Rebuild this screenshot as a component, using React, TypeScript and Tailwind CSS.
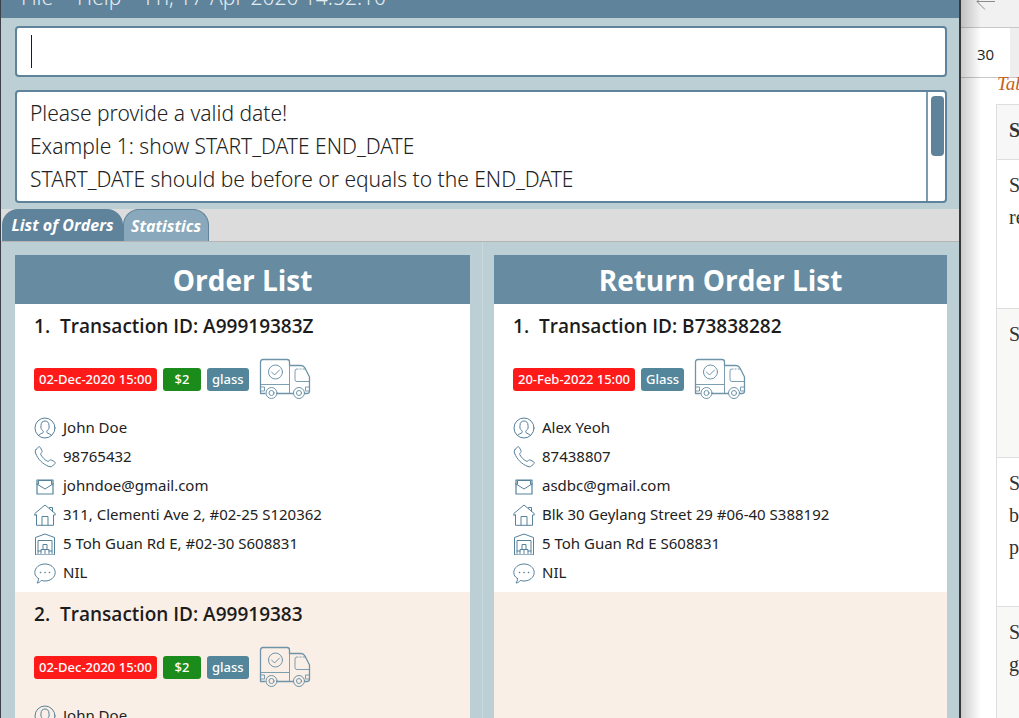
import type { ReactNode } from "react";

type Order = {
  id: string;
  date: string;
  cost?: string;
  tag: string;
  name: string;
  phone: string;
  email: string;
  address: string;
  warehouse: string;
  comment: string;
};

const orders: Order[] = [
  {
    id: "A99919383Z",
    date: "02-Dec-2020 15:00",
    cost: "$2",
    tag: "glass",
    name: "John Doe",
    phone: "98765432",
    email: "johndoe@gmail.com",
    address: "311, Clementi Ave 2, #02-25 S120362",
    warehouse: "5 Toh Guan Rd E, #02-30 S608831",
    comment: "NIL",
  },
  {
    id: "A99919383",
    date: "02-Dec-2020 15:00",
    cost: "$2",
    tag: "glass",
    name: "John Doe",
    phone: "98765432",
    email: "johndoe@gmail.com",
    address: "311, Clementi Ave 2, #02-25 S120362",
    warehouse: "5 Toh Guan Rd E, #02-30 S608831",
    comment: "NIL",
  },
];

const returns: Order[] = [
  {
    id: "B73838282",
    date: "20-Feb-2022 15:00",
    tag: "Glass",
    name: "Alex Yeoh",
    phone: "87438807",
    email: "asdbc@gmail.com",
    address: "Blk 30 Geylang Street 29 #06-40 S388192",
    warehouse: "5 Toh Guan Rd E S608831",
    comment: "NIL",
  },
];

function Icon({ children }: { children: ReactNode }) {
  return (
    <svg
      viewBox="0 0 22 22"
      className="size-[22px] shrink-0"
      fill="none"
      stroke="#55819b"
      strokeWidth="1"
      strokeLinejoin="round"
      strokeLinecap="round"
      aria-hidden="true"
    >
      {children}
    </svg>
  );
}

const PersonIcon = () => (
  <Icon>
    <circle cx="11" cy="11" r="10" />
    <path d="M4.5 18.5c.5-1.8 3.600-1.600 4.600-3 .5-.8 0-1.500-.6-2.300C7 12.500 6.600 10.500 7 8.500 7 5.500 8.600 4 11 4s4 1.500 4 4.500c.4 2 0 4-1.500 4.700-.6.8-1.100 1.500-.6 2.300 1 1.400 4.100 1.200 4.600 3" />
  </Icon>
);

const PhoneIcon = () => (
  <Icon>
    <path d="M2 3.500 4.500 1c1-.5 1.500 0 2 .8l1.500 3c.4 1 0 1.500-.8 2.200-.7.700-.7 1.200-.2 2 1.500 2.500 3.500 4.500 6 6 .8.500 1.300.5 2-.2.700-.8 1.200-1.200 2.200-.8l3 1.500c.8.5 1.300 1 .8 2L18.500 20c-.8.800-2 1-3.500.5C8.500 18 4 13.500 1.500 7 1 5.500 1.200 4.300 2 3.500z" />
  </Icon>
);

const MailIcon = () => (
  <Icon>
    <path d="M3 9v10h16V9" strokeWidth="1.200" />
    <path d="M4.500 9V5.500h13V9M3 9l8 5 8-5" />
    <path d="M3 9V5h16v4" strokeWidth="1.200" />
  </Icon>
);

const HouseIcon = () => (
  <Icon>
    <path d="M.8 11V9.500L11 1l10.200 8.500V11h-1.700v10.300h-17V11zM8 21v-8.500h6V21M15.500 4.500V3.500h3v4" />
  </Icon>
);

const WarehouseIcon = () => (
  <Icon>
    <path d="M1.500 21.500v-17L11 1l9.500 3.500v17zM4 20.500V7.500h14v13" />
    <path d="M9 16.500v-5h4v5M7 20.500v-4h8v4M11 16.500v4M4 18h3m8 0h3" />
  </Icon>
);

const ChatIcon = () => (
  <Icon>
    <path d="M4.500 16.700C2.200 15.200.8 13 .8 10.500.8 5.700 5.400 2 11 2s10.200 3.700 10.200 8.500S16.600 19 11 19c-1.400 0-2.600-.2-3.700-.6-1.200 1.600-2.300 2.400-4.300 2.600 1-1.300 1.500-2.600 1.500-4.300z" />
    <path d="M6.500 10.500h.1M11 10.500h.1M15.500 10.500h.1" strokeWidth="1.600" />
  </Icon>
);

const Truck = () => (
  <svg
    viewBox="0 0 52 42"
    className="h-[42px] w-[52px] shrink-0"
    fill="none"
    stroke="#6f93a8"
    strokeWidth="1"
    strokeLinejoin="round"
    strokeLinecap="round"
    role="img"
    aria-label="Delivery truck"
  >
    <path d="M6 35.500H1.500V4Q1.500 1.500 4 1.500h24q2.500 0 2.500 2.500v3.500H42q2.500 0 4 2.500l4.500 9v14q0 2.500-2.500 2.500h-2.500M18 35.500h16" strokeWidth="1.300" />
    <path d="M30.500 7.500v28M1.500 26.500h29M1.500 29h4v4h-4M50.500 29h-4v4h4M50 23.500H38q-2 0-2-2V13q0-2 2-2h1m2 0h1m2 0h2.500" strokeWidth=".9" />
    <circle cx="16.500" cy="14" r="7" />
    <path d="m12.500 14 3 3 5-5" />
    <circle cx="12.500" cy="35" r="5.500" />
    <circle cx="12.500" cy="35" r="2.500" />
    <circle cx="40" cy="35" r="5.500" />
    <circle cx="40" cy="35" r="2.500" />
  </svg>
);

function OrderCard({ order, index }: { order: Order; index: number }) {
  const rows: [ReactNode, string][] = [
    [<PersonIcon />, order.name],
    [<PhoneIcon />, order.phone],
    [<MailIcon />, order.email],
    [<HouseIcon />, order.address],
    [<WarehouseIcon />, order.warehouse],
    [<ChatIcon />, order.comment],
  ];
  return (
    <li className="bg-white px-[19px] pt-2 pb-[5px] even:bg-[#faefe6]">
      <h3 className="flex gap-[10px] text-[19px] leading-7 font-semibold text-[#1c1c1c]">
        <span>{index}.</span>
        <span>Transaction ID: {order.id}</span>
      </h3>
      <div className="mt-[18px] flex h-[42px] items-center gap-[6px] font-['Noto_Sans',sans-serif] text-[13px] leading-[23px] font-medium text-white">
        <span className="rounded-[3px] bg-[#ff1a1a] px-[5px]">{order.date}</span>
        {order.cost && <span className="w-[38px] rounded-[3px] bg-[#1b8c1b] text-center">{order.cost}</span>}
        <span className="mr-1 rounded-[3px] bg-[#53869b] px-[5px]">{order.tag}</span>
        <Truck />
      </div>
      <ul className="mt-[13px] font-['Noto_Sans',sans-serif] text-[15px] text-[#222]">
        {rows.map(([icon, text], i) => (
          <li key={i} className="flex h-[29px] items-center gap-[7px]">
            {icon}
            <span>{text}</span>
          </li>
        ))}
      </ul>
    </li>
  );
}

function OrderPanel({ title, items }: { title: string; items: Order[] }) {
  return (
    <section className="flex min-h-0 flex-1 flex-col overflow-hidden bg-[#faefe6]">
      <h2 className="h-[49px] shrink-0 bg-[#678ca2] text-center text-[28px] leading-[51px] font-bold text-white">{title}</h2>
      <ol>
        {items.map((o, i) => (
          <OrderCard key={i} order={o} index={i + 1} />
        ))}
      </ol>
    </section>
  );
}

function DocumentPage() {
  const body = [["S", "re"], ["S"], ["S", "b", "p"], ["S", "g"]];
  return (
    <aside className="relative flex w-[58px] shrink-0 flex-col overflow-hidden bg-white">
      <div className="h-7 shrink-0 border-b border-[#c8c8c8] bg-[#f1f1f1] pl-[15px]">
        <svg viewBox="0 0 20 20" className="-mt-2 size-5" fill="none" stroke="#8c8c8c" aria-hidden="true">
          <path d="M19 9.500H1M9 1.500l-8 8 8 8" />
        </svg>
      </div>
      <div className="flex h-[50px] shrink-0 border-b border-[#c8c8c8] bg-[#eeeeee]">
        <span className="w-[49px] bg-white text-center text-[15px] leading-[53px] text-[#1c1c1c]">30</span>
      </div>
      <div className="pl-[35px] font-['Liberation_Serif',serif] text-xl text-[#333]">
        <p className="-mt-2 h-[34px] pl-px text-[19px] leading-7 text-[#c4601d] italic">Tab</p>
        <table className="w-[120px] border-collapse">
          <thead>
            <tr className="h-[55px] bg-[#f7f7f8]">
              <th className="border border-[#dededf] px-3 pb-1 text-left font-bold">S</th>
            </tr>
          </thead>
          <tbody>
            {body.map((lines, i) => (
              <tr key={i} className="h-[149px] even:bg-[#f8f8f7]">
                <td className="border border-[#dededf] px-3 pt-[9px] align-top leading-8">
                  {lines.map((l, j) => (
                    <p key={j}>{l}</p>
                  ))}
                </td>
              </tr>
            ))}
          </tbody>
        </table>
      </div>
      <div className="pointer-events-none absolute inset-y-0 left-0 w-5 bg-linear-to-r from-black/20 to-transparent" />
    </aside>
  );
}

export default function App() {
  return (
    <div className="flex h-screen overflow-hidden font-['Open_Sans','Noto_Sans',sans-serif]">
      <main className="flex min-w-0 flex-1 flex-col overflow-hidden border-r-2 border-l border-r-[#35393c] border-l-[#3c4048] bg-[#bbcfd5]">
        <nav className="flex h-[18px] shrink-0 items-end gap-6 overflow-hidden bg-[#5f839b] pb-[7px] pl-5 font-['Noto_Sans',sans-serif] text-[21px] leading-7 font-light text-[#e4ecf0]">
          <button>File</button>
          <button>Help</button>
          <span>Fri, 17-Apr-2020 14:52:10</span>
        </nav>
        <div className="px-3 pt-2 pl-[14px]">
          <div className="relative">
            <input
              aria-label="Command"
              className="block h-[51px] w-full rounded-[4px] border-2 border-[#5f839b] bg-white px-[14px] text-2xl font-light text-[#222] outline-none"
            />
            <span className="pointer-events-none absolute top-[9px] left-4 h-[33px] w-px bg-[#1c1c1c]" />
          </div>
          <div className="mt-[13px] flex h-[113px] overflow-hidden rounded-[4px] border-2 border-[#5f839b] bg-white">
            <textarea
              aria-label="Result"
              readOnly
              className="block min-w-0 flex-1 resize-none overflow-hidden px-[13px] pt-[5px] font-['Noto_Sans',sans-serif] text-[21px] leading-[33px] font-light text-[#222] outline-none"
              value={"Please provide a valid date!\nExample 1: show START_DATE END_DATE\nSTART_DATE should be before or equals to the END_DATE"}
            />
            <div className="w-[19px] border-l-2 border-[#7b9bb0] pt-1 pl-[3px]">
              <div className="h-[60px] w-[13px] rounded-[4px] bg-[#5f839b]" />
            </div>
          </div>
        </div>
        <div role="tablist" className="mt-[6px] flex h-[33px] shrink-0 border-b border-[#b5b5b5] bg-[#dcdcdc] pl-px text-base font-bold text-white italic">
          <button role="tab" aria-selected="true" className="w-[121px] rounded-t-2xl bg-[#5f839b]">
            List of Orders
          </button>
          <button role="tab" aria-selected="false" className="w-[86px] rounded-t-2xl border border-b-0 border-[#5f839b] bg-[#8aa8bb]">
            Statistics
          </button>
        </div>
        <div className="grid min-h-0 flex-1 grid-cols-[481fr_477fr]">
          <div className="flex min-h-0 min-w-0 flex-col pt-[13px] pr-3 pl-[14px]">
            <OrderPanel title="Order List" items={orders} />
          </div>
          <div className="flex min-h-0 min-w-0 flex-col border-l border-[#c9dadf] pt-[13px] pr-3 pl-[11px]">
            <OrderPanel title="Return Order List" items={returns} />
          </div>
        </div>
      </main>
      <DocumentPage />
    </div>
  );
}
